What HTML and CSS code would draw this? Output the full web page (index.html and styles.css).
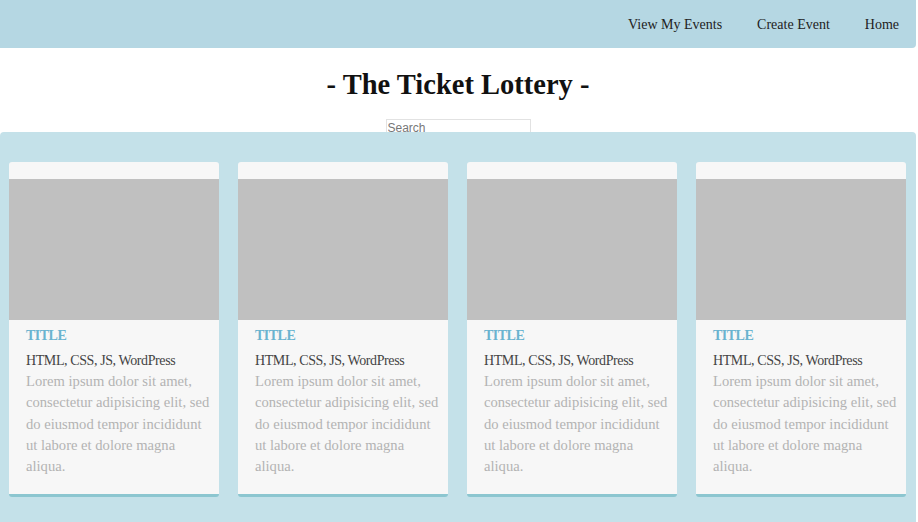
FILE: index.html
```html
<!DOCTYPE html>
<html>
<head>
<meta charset="utf-8">
<link rel="stylesheet" href="styles.css">
</head>
<body>
<nav class="topnav">
  <a href="#">View My Events</a>
  <a href="#">Create Event</a>
  <a href="#">Home</a>
</nav>
<header class="hero">
  <h1>- The Ticket Lottery -</h1>
  <input class="search" type="text" placeholder="Search">
</header>
<main class="events">
  <div class="card">
    <div class="card-top"></div>
    <div class="card-img"></div>
    <div class="card-body">
      <h2>TITLE</h2>
      <p class="tech">HTML, CSS, JS, WordPress</p>
      <p class="desc">Lorem ipsum dolor sit amet, consectetur adipisicing elit, sed do eiusmod tempor incididunt ut labore et dolore magna aliqua.</p>
    </div>
  </div>
  <div class="card">
    <div class="card-top"></div>
    <div class="card-img"></div>
    <div class="card-body">
      <h2>TITLE</h2>
      <p class="tech">HTML, CSS, JS, WordPress</p>
      <p class="desc">Lorem ipsum dolor sit amet, consectetur adipisicing elit, sed do eiusmod tempor incididunt ut labore et dolore magna aliqua.</p>
    </div>
  </div>
  <div class="card">
    <div class="card-top"></div>
    <div class="card-img"></div>
    <div class="card-body">
      <h2>TITLE</h2>
      <p class="tech">HTML, CSS, JS, WordPress</p>
      <p class="desc">Lorem ipsum dolor sit amet, consectetur adipisicing elit, sed do eiusmod tempor incididunt ut labore et dolore magna aliqua.</p>
    </div>
  </div>
  <div class="card">
    <div class="card-top"></div>
    <div class="card-img"></div>
    <div class="card-body">
      <h2>TITLE</h2>
      <p class="tech">HTML, CSS, JS, WordPress</p>
      <p class="desc">Lorem ipsum dolor sit amet, consectetur adipisicing elit, sed do eiusmod tempor incididunt ut labore et dolore magna aliqua.</p>
    </div>
  </div>
</main>
</body>
</html>
```
FILE: styles.css
```css
* { box-sizing: border-box; }
html, body { margin: 0; padding: 0; background: #ffffff; }
body {
  font-family: "Liberation Serif", "DejaVu Serif", serif;
  width: 916px;
}
.topnav {
  height: 48px;
  background: #b5d7e3;
  border-bottom-right-radius: 4px;
  display: flex;
  justify-content: flex-end;
  align-items: center;
  padding: 2px 17px 0 0;
  gap: 35px;
}
.topnav a {
  color: #222;
  text-decoration: none;
  font-size: 14px;
}
.hero {
  display: flex;
  flex-direction: column;
  align-items: center;
  height: 84px;
}
.hero h1 {
  margin: 21px 0 0;
  font-size: 28.5px;
  font-weight: bold;
  color: #111;
  line-height: 32px;
}
.search {
  margin-top: 18px;
  width: 145px;
  height: 18px;
  border: 1px solid #e2e2e2;
  font-family: "Liberation Sans", Arial, sans-serif;
  font-size: 12px;
  padding: 1px 1px 0;
}
.search::placeholder { color: #777; }
.events {
  position: relative;
  background: #c4e1e9;
  border-top-left-radius: 4px;
  border-top-right-radius: 4px;
  min-height: 390px;
  padding: 30px 10px 0 9px;
  display: flex;
  gap: 19px;
}
.card {
  width: 210px;
  height: 335px;
  background: #f7f7f7;
  border-radius: 3px;
  border-bottom: 3px solid #8cc6d0;
  display: flex;
  flex-direction: column;
}
.card-top { height: 17px; }
.card-img { height: 141px; background: #c0c0c0; }
.card-body { padding: 7px 8px 0 17px; }
.card-body h2 {
  margin: 0;
  font-size: 14px;
  font-weight: bold;
  color: #6ab3cf;
  line-height: 17px;
  letter-spacing: -0.5px;
}
.tech {
  margin: 8px 0 0;
  font-size: 14px;
  color: #444;
  line-height: 18px;
  letter-spacing: -0.4px;
}
.desc {
  margin: 1px 0 0;
  font-size: 14.6px;
  color: #b3b3b3;
  line-height: 21.3px;
}
```
